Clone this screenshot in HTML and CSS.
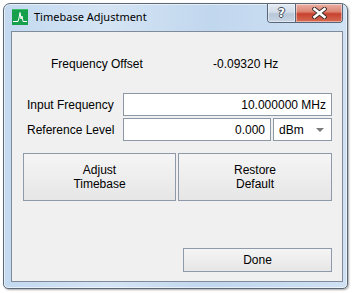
FILE: index.html
```html
<!DOCTYPE html>
<html>
<head>
<meta charset="utf-8">
<link rel="stylesheet" href="styles.css">
</head>
<body>
<div class="window">
  <div class="titlebar">
    <svg class="app-icon" width="16" height="16" viewBox="0 0 16 16">
      <rect x="0" y="0" width="16" height="16" fill="#17a04c"/>
      <rect x="0" y="0" width="16" height="1" fill="#3cbf6c"/>
      <path d="M1 12.5 H6 L7 9 L8 3.5 L9 10 L10 7 L11 12.5 H15" fill="none" stroke="#ffffff" stroke-width="1"/>
    </svg>
    <span class="title">Timebase Adjustment</span>
    <div class="caption-buttons">
      <div class="cap-btn help"><span class="help-glyph">?</span></div>
      <div class="cap-btn close">
        <svg width="15" height="12" viewBox="0 0 15 12">
          <path d="M2.5 2 L12.5 10 M12.5 2 L2.5 10" stroke="#3c2a28" stroke-width="4.4" stroke-linecap="square"/>
          <path d="M2.5 2 L12.5 10 M12.5 2 L2.5 10" stroke="#ffffff" stroke-width="2.6" stroke-linecap="square"/>
        </svg>
      </div>
    </div>
  </div>
  <div class="client">
    <div class="offset-row">
      <span class="offset-label">Frequency Offset</span>
      <span class="offset-value">-0.09320 Hz</span>
    </div>
    <div class="form">
      <div class="label">Input Frequency</div>
      <div class="field wide">10.000000 MHz</div>
      <div class="label">Reference Level</div>
      <div class="field">0.000</div>
      <div class="combo"><span>dBm</span><span class="arrow"></span></div>
    </div>
    <div class="actions">
      <div class="btn big">Adjust<br>Timebase</div>
      <div class="btn big">Restore<br>Default</div>
    </div>
    <div class="footer">
      <div class="btn done">Done</div>
    </div>
  </div>
</div>
</body>
</html>
```
FILE: styles.css
```css
html, body {
  margin: 0;
  padding: 0;
  background: #ffffff;
}

body {
  width: 353px;
  height: 293px;
  overflow: hidden;
  font-family: "Liberation Sans", Arial, sans-serif;
  font-size: 12px;
  color: #000;
}

.window {
  margin: 3px 0 0 3px;
  width: 345px;
  height: 286px;
  box-sizing: border-box;
  border: 1px solid #5d6876;
  border-radius: 7px 7px 5px 5px;
  background: linear-gradient(90deg, #c3d9f0 0%, #d4e4f4 30%, #c1d7ee 60%, #cfe1f3 100%);
  box-shadow: inset 0 0 0 1px rgba(255,255,255,0.55), 1px 1px 2px rgba(0,0,0,0.35);
  padding: 0 4px 6px 7px;
  display: flex;
  flex-direction: column;
}

.titlebar {
  height: 27px;
  display: flex;
  align-items: flex-start;
}

.app-icon {
  margin: 5px 0 0 1px;
  flex: none;
}

.title {
  margin: 5px 0 0 6px;
  font-family: "Noto Sans", "Open Sans", sans-serif;
  font-size: 11px;
  line-height: 16px;
  color: #000;
}

.caption-buttons {
  margin-left: auto;
  display: flex;
  border: 1px solid #56657a;
  border-top: none;
  border-radius: 0 0 4px 4px;
  overflow: hidden;
  height: 18px;
}

.cap-btn {
  display: flex;
  align-items: center;
  justify-content: center;
  box-shadow: inset 0 0 0 1px rgba(255,255,255,0.45);
}

.help {
  width: 27px;
  background: linear-gradient(#e3eaf3 0%, #d3dde9 45%, #b8c7d8 55%, #c8d5e4 100%);
  border-right: 1px solid #56657a;
}

.help-glyph {
  font-family: "DejaVu Sans", sans-serif;
  font-weight: bold;
  font-size: 12px;
  line-height: 12px;
  color: #ffffff;
  text-shadow: 1px 0 0 #3e4a58, -1px 0 0 #3e4a58, 0 1px 0 #3e4a58, 0 -1px 0 #3e4a58;
}

.close {
  width: 46px;
  background: linear-gradient(#eab0a4 0%, #dd8674 42%, #c7422f 55%, #d66b52 100%);
}

.client {
  width: 332px;
  height: 251px;
  box-sizing: border-box;
  border: 1px solid #7f8b9b;
  background: #f0f0f0;
  padding: 24px 10px 9px 11px;
  display: flex;
  flex-direction: column;
}

.offset-row {
  display: flex;
  line-height: 16px;
}

.offset-label {
  width: 162px;
  padding-left: 28px;
}

.form {
  margin-top: 21px;
  display: grid;
  grid-template-columns: 98px 148px 59px;
  grid-auto-rows: 23px;
  column-gap: 2px;
  row-gap: 2px;
}

.label {
  padding-left: 4px;
  display: flex;
  align-items: center;
  white-space: nowrap;
}

.field, .combo {
  box-sizing: border-box;
  border: 1px solid #8d98a6;
  background: #ffffff;
  display: flex;
  align-items: center;
}

.field {
  justify-content: flex-end;
  padding-right: 5px;
}

.field.wide {
  grid-column: 2 / 4;
}

.combo {
  padding-left: 5px;
  justify-content: space-between;
  padding-right: 7px;
}

.arrow {
  width: 0;
  height: 0;
  border-left: 4px solid transparent;
  border-right: 4px solid transparent;
  border-top: 4px solid #7a7a7a;
  margin-top: 1px;
}

.actions {
  margin-top: 12px;
  display: grid;
  grid-template-columns: 153px 154px;
  column-gap: 2px;
}

.btn {
  box-sizing: border-box;
  border: 1px solid #8e9aa9;
  background: linear-gradient(#f5f5f5, #e6e6e6);
  display: flex;
  align-items: center;
  justify-content: center;
  text-align: center;
}

.btn.big {
  height: 48px;
  line-height: 14px;
}

.footer {
  margin-top: auto;
  display: flex;
  justify-content: flex-end;
}

.btn.done {
  width: 149px;
  height: 24px;
}
```
